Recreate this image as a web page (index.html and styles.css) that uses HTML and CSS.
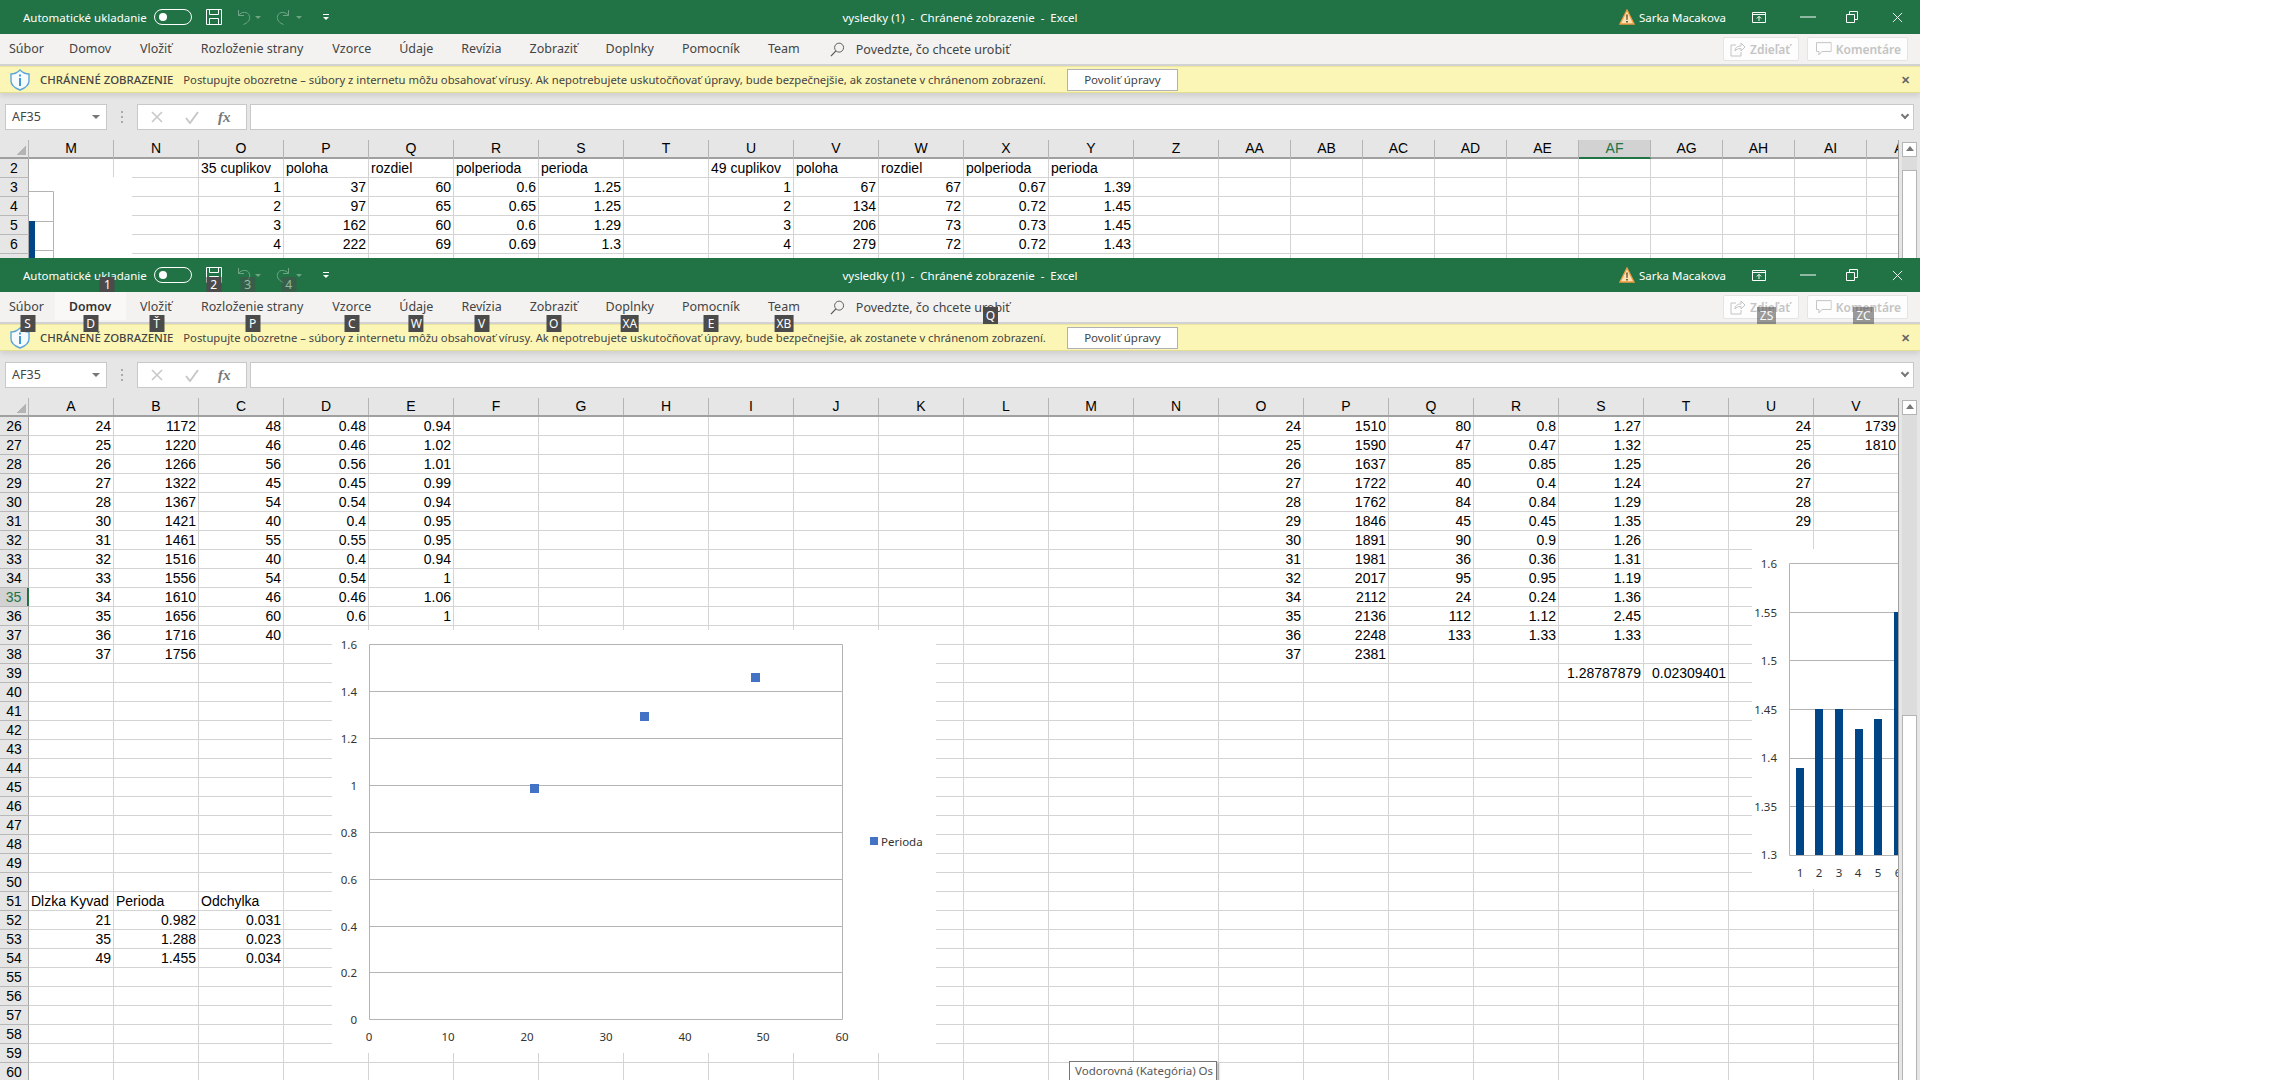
FILE: index.html
```html
<!DOCTYPE html>
<html lang="sk">
<head>
    <meta charset="UTF-8">
    <title>vysledky (1) - Excel</title>
    <link rel="stylesheet" href="styles.css">
</head>
<body>

<svg class="sprite">
    <symbol id="i-save" viewBox="0 0 16 16"><path d="M.5.5h15v15H.5zM3.5.5v5h9v-5M3.5 15.5v-6h9v6" fill="none" stroke="currentColor"/></symbol>
    <symbol id="i-undo" viewBox="0 0 16 16"><path d="M3.5 1v5.500h5.500M3.500 6.500C6 2.500 13 2 14.500 7c1 4-2 7-6 8.500" fill="none" stroke="currentColor"/></symbol>
    <symbol id="i-redo" viewBox="0 0 16 16"><path d="M12.500 1v5.500H7M12.500 6.500C10 2.500 3 2 1.500 7c-1 4 2 7 6 8.500" fill="none" stroke="currentColor"/></symbol>
    <symbol id="i-warn" viewBox="0 0 16 16"><path d="M8 1l7 14H1z" fill="#fbe2b4" stroke="#f09a3e" stroke-width="1.300"/><path d="M7.300 5.500h1.400l-.2 5.500h-1zM7.200 12h1.600v1.600H7.200z" fill="#5a3a1a"/></symbol>
    <symbol id="i-ribbon" viewBox="0 0 14 11"><path d="M.5.5h13v10H.5zM.5 2.500h13M7 9V4.500M4.800 6.500L7 4.300l2.200 2.200" fill="none" stroke="currentColor"/></symbol>
    <symbol id="i-min" viewBox="0 0 16 2"><path d="M0 1h16" stroke="currentColor"/></symbol>
    <symbol id="i-restore" viewBox="0 0 12 12"><path d="M.5 3.500h8v8h-8zM3.500 3.500v-3h8v8h-3" fill="none" stroke="currentColor"/></symbol>
    <symbol id="i-close" viewBox="0 0 12 12"><path d="M1 1l10 10M11 1L1 11" fill="none" stroke="currentColor"/></symbol>
    <symbol id="i-search" viewBox="0 0 16 16"><circle cx="9.700" cy="6" r="4.800" fill="none" stroke="currentColor"/><path d="M6.300 9.500L1 15" stroke="currentColor" stroke-width="1.300"/></symbol>
    <symbol id="i-share" viewBox="0 0 16 16"><path d="M6 4H1v11h10v-4M5 10c0-3 2-5 6-5V2l4 4-4 4V7.500c-3 0-5 1-6 2.500z" fill="none" stroke="currentColor"/></symbol>
    <symbol id="i-comment" viewBox="0 0 16 16"><path d="M.5 1.500h15v9H6l-3 3.500v-3.500H.5z" fill="none" stroke="currentColor"/></symbol>
    <symbol id="i-shield" viewBox="0 0 20 22"><path d="M10 1C7.500 3.500 4.500 5 1 5v7c0 5 5 7.500 9 9 4-1.500 9-4 9-9V5c-3.500 0-6.500-1.500-9-4z" fill="#f6fafd" stroke="#5ba6d8" stroke-width="1.400"/><path d="M9 5.500h2v2H9zM9 9h2v8H9z" fill="#3f9bd8"/></symbol>
    <symbol id="i-cross" viewBox="0 0 14 14"><path d="M2 2l10 10M12 2L2 12" fill="none" stroke="currentColor" stroke-width="1.600"/></symbol>
    <symbol id="i-check" viewBox="0 0 14 14"><path d="M1 8l4 5 8-11" fill="none" stroke="currentColor" stroke-width="2"/></symbol>
</svg>

<!-- back window, only its top part shows -->
<div class="window window-back">
    <div class="titlebar">
        <div class="qat">
            <div class="autosave"><span>Automatické ukladanie</span><span class="toggle"><i></i></span></div>
            <div class="qat-btn save"><svg class="ico16"><use href="#i-save"/></svg></div>
            <div class="qat-btn undo dim"><svg class="ico16"><use href="#i-undo"/></svg><i class="drop"></i></div>
            <div class="qat-btn redo dim"><svg class="ico16"><use href="#i-redo"/></svg><i class="drop"></i></div>
            <div class="customize"><i class="bar"></i><i class="drop"></i></div>
        </div>
        <div class="doc-title">vysledky (1)&nbsp; -&nbsp; Chránené zobrazenie&nbsp; -&nbsp; Excel</div>
        <div class="account">
            <svg class="warn"><use href="#i-warn"/></svg>
            <span class="user">Sarka Macakova</span>
            <svg class="ribbon-ico"><use href="#i-ribbon"/></svg>
            <svg class="min-ico"><use href="#i-min"/></svg>
            <svg class="restore-ico"><use href="#i-restore"/></svg>
            <svg class="close-ico"><use href="#i-close"/></svg>
        </div>
    </div>
    <div class="tabs">
        <div class="tab">Súbor</div>
        <div class="tab">Domov</div>
        <div class="tab">Vložiť</div>
        <div class="tab">Rozloženie strany</div>
        <div class="tab">Vzorce</div>
        <div class="tab">Údaje</div>
        <div class="tab">Revízia</div>
        <div class="tab">Zobraziť</div>
        <div class="tab">Doplnky</div>
        <div class="tab">Pomocník</div>
        <div class="tab">Team</div>
        <div class="search"><svg class="search-ico"><use href="#i-search"/></svg><span>Povedzte, čo chcete urobiť</span></div>
        <div class="ribbon-btns">
            <div class="rbtn share"><svg class="ico16"><use href="#i-share"/></svg>Zdieľať</div>
            <div class="rbtn comment"><svg class="ico16"><use href="#i-comment"/></svg>Komentáre</div>
        </div>
    </div>
    <div class="notice">
        <svg class="shield"><use href="#i-shield"/></svg>
        <span class="notice-title">CHRÁNENÉ ZOBRAZENIE</span>
        <span class="notice-text">Postupujte obozretne – súbory z internetu môžu obsahovať vírusy. Ak nepotrebujete uskutočňovať úpravy, bude bezpečnejšie, ak zostanete v chránenom zobrazení.</span>
        <button class="enable-btn">Povoliť úpravy</button>
        <span class="notice-close">✕</span>
    </div>
    <div class="formula">
        <div class="namebox">AF35<i class="caret"></i></div>
        <div class="grip"></div>
        <div class="fx-btns"><svg class="ico14"><use href="#i-cross"/></svg><svg class="ico14"><use href="#i-check"/></svg><span class="fx">fx</span></div>
        <div class="fx-input"><i class="chevron"></i></div>
    </div>
    <div class="sheet">
        <div class="grid">
            <div class="row head">
                <span class="corner"></span><span>M</span><span>N</span><span>O</span><span>P</span><span>Q</span><span>R</span><span>S</span><span>T</span><span>U</span><span>V</span><span>W</span><span>X</span><span>Y</span><span>Z</span><span>AA</span><span>AB</span><span>AC</span><span>AD</span><span>AE</span><span class="active">AF</span><span>AG</span><span>AH</span><span>AI</span><span>AJ</span>
            </div>
            <div class="row"><span class="rh">2</span><span class="from-o t">35 cuplikov</span><span class="t">poloha</span><span class="t">rozdiel</span><span class="t">polperioda</span><span class="t">perioda</span><span class="from-u t">49 cuplikov</span><span class="t">poloha</span><span class="t">rozdiel</span><span class="t">polperioda</span><span class="t">perioda</span></div>
            <div class="row"><span class="rh">3</span><span class="from-o">1</span><span>37</span><span>60</span><span>0.6</span><span>1.25</span><span class="from-u">1</span><span>67</span><span>67</span><span>0.67</span><span>1.39</span></div>
            <div class="row"><span class="rh">4</span><span class="from-o">2</span><span>97</span><span>65</span><span>0.65</span><span>1.25</span><span class="from-u">2</span><span>134</span><span>72</span><span>0.72</span><span>1.45</span></div>
            <div class="row"><span class="rh">5</span><span class="from-o">3</span><span>162</span><span>60</span><span>0.6</span><span>1.29</span><span class="from-u">3</span><span>206</span><span>73</span><span>0.73</span><span>1.45</span></div>
            <div class="row"><span class="rh">6</span><span class="from-o">4</span><span>222</span><span>69</span><span>0.69</span><span>1.3</span><span class="from-u">4</span><span>279</span><span>72</span><span>0.72</span><span>1.43</span></div>
            <div class="row"><span class="rh"></span></div>
        </div>
        <div class="vscroll"><div class="vs-up"><i></i></div><div class="vs-track"></div><div class="vs-thumb"></div></div>
        <svg class="chart chart-peek" viewBox="0 0 103 81">
            <path d="M0 14.500h24.500V81M0 44.500h24.500M0 73.500h24.500" fill="none" stroke="#b4b4b4"/>
            <rect x="0" y="44" width="6" height="37" fill="#004586"/>
        </svg>
    </div>
</div>

<!-- front window with the key tips showing -->
<div class="window window-front">
    <div class="titlebar">
        <div class="qat">
            <div class="autosave"><span>Automatické ukladanie</span><span class="toggle"><i></i></span><span class="tip tip-qat">1</span></div>
            <div class="qat-btn save"><svg class="ico16"><use href="#i-save"/></svg><span class="tip tip-qat">2</span></div>
            <div class="qat-btn undo dim"><svg class="ico16"><use href="#i-undo"/></svg><i class="drop"></i><span class="tip tip-qat">3</span></div>
            <div class="qat-btn redo dim"><svg class="ico16"><use href="#i-redo"/></svg><i class="drop"></i><span class="tip tip-qat">4</span></div>
            <div class="customize"><i class="bar"></i><i class="drop"></i></div>
        </div>
        <div class="doc-title">vysledky (1)&nbsp; -&nbsp; Chránené zobrazenie&nbsp; -&nbsp; Excel</div>
        <div class="account">
            <svg class="warn"><use href="#i-warn"/></svg>
            <span class="user">Sarka Macakova</span>
            <svg class="ribbon-ico"><use href="#i-ribbon"/></svg>
            <svg class="min-ico"><use href="#i-min"/></svg>
            <svg class="restore-ico"><use href="#i-restore"/></svg>
            <svg class="close-ico"><use href="#i-close"/></svg>
        </div>
    </div>
    <div class="tabs">
        <div class="tab">Súbor<span class="tip">S</span></div>
        <div class="tab tab-active">Domov<span class="tip">D</span></div>
        <div class="tab">Vložiť<span class="tip">Ť</span></div>
        <div class="tab">Rozloženie strany<span class="tip">P</span></div>
        <div class="tab">Vzorce<span class="tip">C</span></div>
        <div class="tab">Údaje<span class="tip">W</span></div>
        <div class="tab">Revízia<span class="tip">V</span></div>
        <div class="tab">Zobraziť<span class="tip">O</span></div>
        <div class="tab">Doplnky<span class="tip">XA</span></div>
        <div class="tab">Pomocník<span class="tip">E</span></div>
        <div class="tab">Team<span class="tip">XB</span></div>
        <div class="search"><svg class="search-ico"><use href="#i-search"/></svg><span>Povedzte, čo chcete urobiť</span><span class="tip tip-q">Q</span></div>
        <div class="ribbon-btns">
            <div class="rbtn share"><svg class="ico16"><use href="#i-share"/></svg>Zdieľať<span class="tip tip-zs">ZS</span></div>
            <div class="rbtn comment"><svg class="ico16"><use href="#i-comment"/></svg>Komentáre<span class="tip tip-zc">ZC</span></div>
        </div>
    </div>
    <div class="notice">
        <svg class="shield"><use href="#i-shield"/></svg>
        <span class="notice-title">CHRÁNENÉ ZOBRAZENIE</span>
        <span class="notice-text">Postupujte obozretne – súbory z internetu môžu obsahovať vírusy. Ak nepotrebujete uskutočňovať úpravy, bude bezpečnejšie, ak zostanete v chránenom zobrazení.</span>
        <button class="enable-btn">Povoliť úpravy</button>
        <span class="notice-close">✕</span>
    </div>
    <div class="formula">
        <div class="namebox">AF35<i class="caret"></i></div>
        <div class="grip"></div>
        <div class="fx-btns"><svg class="ico14"><use href="#i-cross"/></svg><svg class="ico14"><use href="#i-check"/></svg><span class="fx">fx</span></div>
        <div class="fx-input"><i class="chevron"></i></div>
    </div>
    <div class="sheet">
        <div class="grid">
            <div class="row head">
                <span class="corner"></span><span>A</span><span>B</span><span>C</span><span>D</span><span>E</span><span>F</span><span>G</span><span>H</span><span>I</span><span>J</span><span>K</span><span>L</span><span>M</span><span>N</span><span>O</span><span>P</span><span>Q</span><span>R</span><span>S</span><span>T</span><span>U</span><span>V</span>
            </div>
            <div class="row"><span class="rh">26</span><span>24</span><span>1172</span><span>48</span><span>0.48</span><span>0.94</span><span class="from-o">24</span><span>1510</span><span>80</span><span>0.8</span><span>1.27</span><span class="from-u">24</span><span>1739</span></div>
            <div class="row"><span class="rh">27</span><span>25</span><span>1220</span><span>46</span><span>0.46</span><span>1.02</span><span class="from-o">25</span><span>1590</span><span>47</span><span>0.47</span><span>1.32</span><span class="from-u">25</span><span>1810</span></div>
            <div class="row"><span class="rh">28</span><span>26</span><span>1266</span><span>56</span><span>0.56</span><span>1.01</span><span class="from-o">26</span><span>1637</span><span>85</span><span>0.85</span><span>1.25</span><span class="from-u">26</span></div>
            <div class="row"><span class="rh">29</span><span>27</span><span>1322</span><span>45</span><span>0.45</span><span>0.99</span><span class="from-o">27</span><span>1722</span><span>40</span><span>0.4</span><span>1.24</span><span class="from-u">27</span></div>
            <div class="row"><span class="rh">30</span><span>28</span><span>1367</span><span>54</span><span>0.54</span><span>0.94</span><span class="from-o">28</span><span>1762</span><span>84</span><span>0.84</span><span>1.29</span><span class="from-u">28</span></div>
            <div class="row"><span class="rh">31</span><span>30</span><span>1421</span><span>40</span><span>0.4</span><span>0.95</span><span class="from-o">29</span><span>1846</span><span>45</span><span>0.45</span><span>1.35</span><span class="from-u">29</span></div>
            <div class="row"><span class="rh">32</span><span>31</span><span>1461</span><span>55</span><span>0.55</span><span>0.95</span><span class="from-o">30</span><span>1891</span><span>90</span><span>0.9</span><span>1.26</span></div>
            <div class="row"><span class="rh">33</span><span>32</span><span>1516</span><span>40</span><span>0.4</span><span>0.94</span><span class="from-o">31</span><span>1981</span><span>36</span><span>0.36</span><span>1.31</span></div>
            <div class="row"><span class="rh">34</span><span>33</span><span>1556</span><span>54</span><span>0.54</span><span>1</span><span class="from-o">32</span><span>2017</span><span>95</span><span>0.95</span><span>1.19</span></div>
            <div class="row"><span class="rh rh-active">35</span><span>34</span><span>1610</span><span>46</span><span>0.46</span><span>1.06</span><span class="from-o">34</span><span>2112</span><span>24</span><span>0.24</span><span>1.36</span></div>
            <div class="row"><span class="rh">36</span><span>35</span><span>1656</span><span>60</span><span>0.6</span><span>1</span><span class="from-o">35</span><span>2136</span><span>112</span><span>1.12</span><span>2.45</span></div>
            <div class="row"><span class="rh">37</span><span>36</span><span>1716</span><span>40</span><span class="from-o">36</span><span>2248</span><span>133</span><span>1.33</span><span>1.33</span></div>
            <div class="row"><span class="rh">38</span><span>37</span><span>1756</span><span class="from-o">37</span><span>2381</span></div>
            <div class="row"><span class="rh">39</span><span class="from-s">1.28787879</span><span>0.02309401</span></div>
            <div class="row"><span class="rh">40</span></div>
            <div class="row"><span class="rh">41</span></div>
            <div class="row"><span class="rh">42</span></div>
            <div class="row"><span class="rh">43</span></div>
            <div class="row"><span class="rh">44</span></div>
            <div class="row"><span class="rh">45</span></div>
            <div class="row"><span class="rh">46</span></div>
            <div class="row"><span class="rh">47</span></div>
            <div class="row"><span class="rh">48</span></div>
            <div class="row"><span class="rh">49</span></div>
            <div class="row"><span class="rh">50</span></div>
            <div class="row"><span class="rh">51</span><span class="t">Dlzka Kyvad</span><span class="t">Perioda</span><span class="t">Odchylka</span></div>
            <div class="row"><span class="rh">52</span><span>21</span><span>0.982</span><span>0.031</span></div>
            <div class="row"><span class="rh">53</span><span>35</span><span>1.288</span><span>0.023</span></div>
            <div class="row"><span class="rh">54</span><span>49</span><span>1.455</span><span>0.034</span></div>
            <div class="row"><span class="rh">55</span></div>
            <div class="row"><span class="rh">56</span></div>
            <div class="row"><span class="rh">57</span></div>
            <div class="row"><span class="rh">58</span></div>
            <div class="row"><span class="rh">59</span></div>
            <div class="row"><span class="rh">60</span></div>
        </div>
        <div class="vscroll"><div class="vs-up"><i></i></div><div class="vs-track"></div><div class="vs-thumb"></div></div>

        <svg class="chart chart-scatter" viewBox="0 0 604 423">
            <path d="M37.500 14.500H510.500V389.500H37.500zM37.500 61.500H510.500M37.500 108.500H510.500M37.500 155.500H510.500M37.500 202.500H510.500M37.500 249.500H510.500M37.500 296.500H510.500M37.500 342.500H510.500" fill="none" stroke="#b4b4b4"/>
            <g class="lbl-y">
                <text x="25" y="19">1.6</text><text x="25" y="66">1.4</text><text x="25" y="113">1.2</text><text x="25" y="160">1</text><text x="25" y="207">0.8</text><text x="25" y="254">0.6</text><text x="25" y="301">0.4</text><text x="25" y="347">0.2</text><text x="25" y="394">0</text>
            </g>
            <g class="lbl-x">
                <text x="37" y="411">0</text><text x="116" y="411">10</text><text x="195" y="411">20</text><text x="274" y="411">30</text><text x="353" y="411">40</text><text x="431" y="411">50</text><text x="510" y="411">60</text>
            </g>
            <g fill="#4472c4">
                <rect x="198" y="154" width="9" height="9"/><rect x="308" y="82" width="9" height="9"/><rect x="419" y="43" width="9" height="9"/>
                <rect x="538" y="207" width="8" height="8"/>
            </g>
            <text class="lbl" x="549" y="216">Perioda</text>
        </svg>

        <svg class="chart chart-bars" viewBox="0 0 146 340">
            <path d="M146 14.500H37.500V306.500H146M37.500 63.500H146M37.500 111.500H146M37.500 160.500H146M37.500 209.500H146M37.500 257.500H146" fill="none" stroke="#b4b4b4"/>
            <g class="lbl-y">
                <text x="25" y="19">1.6</text><text x="25" y="68">1.55</text><text x="25" y="116">1.5</text><text x="25" y="165">1.45</text><text x="25" y="213">1.4</text><text x="25" y="262">1.35</text><text x="25" y="310">1.3</text>
            </g>
            <g fill="#004586">
                <rect x="44" y="219" width="8" height="87"/><rect x="63" y="160" width="8" height="146"/><rect x="83" y="160" width="8" height="146"/><rect x="103" y="180" width="8" height="126"/><rect x="122" y="170" width="8" height="136"/><rect x="142" y="63" width="8" height="243"/>
            </g>
            <g class="lbl-x">
                <text x="48" y="328">1</text><text x="67" y="328">2</text><text x="87" y="328">3</text><text x="106" y="328">4</text><text x="126" y="328">5</text><text x="146" y="328">6</text>
            </g>
        </svg>

        <div class="tooltip">Vodorovná (Kategória) Os</div>
    </div>
</div>

</body>
</html>
```
FILE: styles.css
```css
* {
    box-sizing: border-box;
    margin: 0;
    padding: 0;
}

body {
    background: white;
    width: 2288px;
    height: 1080px;
    overflow: hidden;
    font-family: "Noto Sans", sans-serif;
    font-size: 11.500px;
    color: #444;
}

i {
    display: block;
}

.sprite {
    position: absolute;
    width: 0;
    height: 0;
}

.window {
    position: relative;
    width: 1920px;
    overflow: hidden;
    background: #e6e6e6;
}

.window-back {
    height: 258px;
}

.window-front {
    height: 822px;
}

/* title bar */
.titlebar {
    display: grid;
    grid-template-columns: 1fr auto 1fr;
    align-items: center;
    height: 34px;
    background: #217346;
    color: white;
}

.qat {
    display: flex;
    align-items: center;
    height: 100%;
    padding-left: 23px;
}

.autosave {
    position: relative;
    display: flex;
    align-items: center;
    gap: 7px;
    height: 100%;
}

.toggle {
    display: block;
    width: 38px;
    height: 16px;
    border: 1.5px solid white;
    border-radius: 8px;
}

.toggle i {
    width: 8px;
    height: 8px;
    margin: 2.500px 0 0 4px;
    border-radius: 50%;
    background: white;
}

.qat-btn {
    position: relative;
    display: flex;
    align-items: center;
    gap: 4px;
    height: 100%;
}

.save {
    margin-left: 14px;
}

.undo {
    margin-left: 13px;
}

.redo {
    margin-left: 15px;
}

.dim svg,
.dim .drop {
    opacity: 0.35;
}

.ico16 {
    display: block;
    width: 16px;
    height: 16px;
}

.ico14 {
    display: block;
    width: 14px;
    height: 14px;
}

.drop {
    width: 0;
    height: 0;
    border-left: 3px solid transparent;
    border-right: 3px solid transparent;
    border-top: 3px solid white;
}

.customize {
    margin-left: 21px;
}

.customize .bar {
    width: 6px;
    height: 1px;
    margin-bottom: 2px;
    background: white;
}

.doc-title {
    white-space: nowrap;
}

.account {
    display: flex;
    align-items: center;
    justify-content: flex-end;
    padding-right: 17px;
}

.warn {
    width: 16px;
    height: 16px;
}

.user {
    margin-left: 4px;
}

.ribbon-ico {
    width: 14px;
    height: 11px;
    margin-left: 26px;
}

.min-ico {
    width: 16px;
    height: 2px;
    margin-left: 34px;
}

.restore-ico {
    width: 12px;
    height: 12px;
    margin-left: 30px;
}

.close-ico {
    width: 11px;
    height: 11px;
    margin-left: 34px;
}

/* ribbon tabs */
.tabs {
    position: relative;
    z-index: 2;
    display: flex;
    height: 32px;
    padding-right: 12px;
    background: #f3f2f1;
    border-bottom: 2px solid #d2d2d2;
    font-size: 12.500px;
}

.tab {
    position: relative;
    height: 28px;
    padding: 0 14px;
    line-height: 30px;
    white-space: nowrap;
}

.tab:first-child {
    padding-left: 9px;
    padding-right: 11px;
}

.tab:nth-child(2),
.tab:nth-child(3),
.tab:nth-child(4) {
    padding-right: 15px;
}

.tab-active {
    background: #f9f8f7;
    color: #333;
    font-size: 12.200px;
    font-weight: 600;
}

.search {
    position: relative;
    display: flex;
    align-items: center;
    gap: 11px;
    height: 28px;
    margin-left: 16px;
    padding-top: 2px;
}

.search-ico {
    width: 15px;
    height: 15px;
    color: #555;
}

.ribbon-btns {
    display: flex;
    gap: 8px;
    margin-left: auto;
    padding-top: 3px;
}

.rbtn {
    position: relative;
    display: flex;
    align-items: center;
    gap: 4px;
    height: 24px;
    padding: 0 6px;
    background: #fdfdfd;
    border: 1px solid #e4e4e4;
    border-radius: 2px;
    color: #c4c4c4;
    font-size: 12px;
    font-weight: 600;
    white-space: nowrap;
}

.share {
    width: 76px;
}

.comment {
    width: 101px;
    padding-left: 8px;
}

/* key tips */
.tip {
    position: absolute;
    top: 23px;
    left: 50%;
    transform: translateX(-50%);
    min-width: 15px;
    height: 17px;
    padding: 0 2px;
    background: #4b4b4b;
    color: white;
    font-size: 12px;
    font-weight: 400;
    line-height: 17px;
    text-align: center;
}

.tip-qat {
    top: 19px;
    height: 15px;
    line-height: 15px;
}

.dim .tip {
    opacity: 0.5;
}

.tip-q {
    top: 15px;
    left: 153px;
    transform: none;
}

.tip-zs,
.tip-zc {
    top: 11px;
    transform: none;
    opacity: 0.55;
}

.tip-zs {
    left: 33px;
    min-width: 19px;
}

.tip-zc {
    left: 45px;
    min-width: 21px;
}

/* protected view bar */
.notice {
    position: relative;
    z-index: 1;
    display: flex;
    align-items: center;
    height: 27px;
    padding: 0 10px;
    background: #fcf6b6;
    border-top: 1px solid #ece6a0;
    border-bottom: 1px solid #e4de90;
    box-shadow: 0 3px 5px rgba(0, 0, 0, 0.1);
    font-size: 11.250px;
}

.shield {
    width: 20px;
    height: 22px;
}

.notice-title {
    margin-left: 10px;
    font-size: 11.400px;
    font-weight: 500;
}

.notice-text {
    margin-left: 10px;
    white-space: nowrap;
}

.enable-btn {
    width: 111px;
    height: 22px;
    margin-left: 21px;
    background: white;
    border: 1px solid #b0b0b8;
    color: #444;
    font: inherit;
    font-size: 11.500px;
}

.notice-close {
    margin-left: auto;
    color: #666;
    font-size: 11px;
    font-weight: 700;
}

/* formula bar */
.formula {
    display: flex;
    height: 47px;
    padding: 11px 6px 10px 5px;
    background: #e6e6e6;
}

.namebox {
    position: relative;
    width: 102px;
    padding-left: 6px;
    background: white;
    border: 1px solid #c8c8c8;
    line-height: 24px;
    font-size: 12.500px;
}

.caret {
    position: absolute;
    top: 10px;
    right: 6px;
    border-left: 4px solid transparent;
    border-right: 4px solid transparent;
    border-top: 4px solid #777;
}

.grip {
    width: 2px;
    height: 12px;
    margin: 7px 14px 0 14px;
    background: repeating-linear-gradient(#aaa 0 2px, transparent 2px 5px);
}

.fx-btns {
    display: flex;
    align-items: center;
    gap: 21px;
    width: 110px;
    padding-left: 12px;
    background: white;
    border: 1px solid #c8c8c8;
    color: #c8c8c8;
}

.fx {
    margin-left: -2px;
    color: #777;
    font-family: "Liberation Serif", serif;
    font-size: 15px;
    font-style: italic;
    font-weight: 700;
}

.fx-input {
    position: relative;
    flex: 1;
    margin-left: 3px;
    background: white;
    border: 1px solid #c8c8c8;
}

.chevron {
    position: absolute;
    top: 7px;
    right: 5px;
    width: 6px;
    height: 6px;
    border-right: 2px solid #777;
    border-bottom: 2px solid #777;
    transform: rotate(45deg);
}

/* sheet */
.sheet {
    position: relative;
    display: flex;
    height: 700px;
    background: #e6e6e6;
}

.grid {
    width: 1899px;
    overflow: hidden;
    background: white;
    border-right: 1px solid #a0a0a0;
    font-family: "Liberation Sans", sans-serif;
    font-size: 14px;
    color: #000;
}

.row {
    display: grid;
    height: 19px;
    line-height: 18px;
    border-bottom: 1px solid #d4d4d4;
    background-repeat: no-repeat;
}

.window-front .row {
    grid-template-columns: 29px repeat(22, 85px);
    background-image: repeating-linear-gradient(90deg, transparent 0 84px, #d4d4d4 84px 85px);
    background-position: 29px 0;
    background-size: 1870px 100%;
}

.window-back .row {
    grid-template-columns: 29px repeat(14, 85px) repeat(10, 72px);
    background-image:
        repeating-linear-gradient(90deg, transparent 0 84px, #d4d4d4 84px 85px),
        repeating-linear-gradient(90deg, transparent 0 71px, #d4d4d4 71px 72px);
    background-position: 29px 0, 1219px 0;
    background-size: 1190px 100%, 720px 100%;
}

.row > span {
    padding: 0 3px;
    overflow: hidden;
    white-space: nowrap;
    text-align: right;
}

.row > .t {
    padding-left: 2px;
    text-align: left;
}

.row > .rh {
    padding: 0;
    background: #e6e6e6;
    border-right: 1px solid #a8a8a8;
    box-shadow: 0 1px 0 #b8b8b8;
    text-align: center;
}

.row > .rh-active {
    background: #d2d2d2;
    border-right: 2px solid #217346;
    color: #217346;
}

.window .head {
    height: 19px;
    background: #e6e6e6;
    border-bottom: 2px solid #a0a0a0;
    line-height: 17px;
}

.head > span {
    padding: 0;
    border-right: 1px solid #b4b4b4;
    text-align: center;
}

.head > .active {
    height: 19px;
    background: #d2d2d2;
    border-bottom: 2px solid #217346;
    color: #217346;
}

.corner {
    background: linear-gradient(135deg, transparent 50%, #b4b4b4 50%) no-repeat 16px 5px / 10px 10px;
}

.window-back .from-o {
    grid-column: 4;
}

.window-back .from-u {
    grid-column: 10;
}

.window-front .from-o {
    grid-column: 16;
}

.window-front .from-s {
    grid-column: 20;
}

.window-front .from-u {
    grid-column: 22;
}

/* scrollbar */
.vscroll {
    width: 21px;
    padding: 2px 3px 0 3px;
}

.vs-up {
    width: 15px;
    height: 15px;
    background: white;
    border: 1px solid #b4b4b4;
}

.vs-up i {
    width: 0;
    margin: 3px auto 0;
    border-left: 4px solid transparent;
    border-right: 4px solid transparent;
    border-bottom: 5px solid #777;
}

.vs-track {
    background: #dcdcdc;
}

.window-back .vs-track {
    height: 13px;
}

.window-front .vs-track {
    height: 300px;
}

.vs-thumb {
    height: 500px;
    background: white;
    border: 1px solid #b4b4b4;
}

/* charts sit over the cells */
.chart {
    position: absolute;
    background: white;
    font-size: 11.500px;
}

.chart-peek {
    left: 29px;
    top: 37px;
    width: 103px;
    height: 81px;
}

.chart-scatter {
    left: 332px;
    top: 232px;
    width: 604px;
    height: 423px;
}

.chart-bars {
    left: 1752px;
    top: 151px;
    width: 146px;
    height: 340px;
}

.chart text {
    fill: #333;
}

.lbl-y {
    text-anchor: end;
}

.lbl-x {
    text-anchor: middle;
}

.tooltip {
    position: absolute;
    left: 1069px;
    top: 663px;
    width: 148px;
    height: 24px;
    padding-left: 5px;
    background: white;
    border: 1px solid #767676;
    box-shadow: 2px 2px 2px rgba(0, 0, 0, 0.25);
    color: #575757;
    font-size: 11.500px;
    line-height: 18px;
    white-space: nowrap;
}
```
